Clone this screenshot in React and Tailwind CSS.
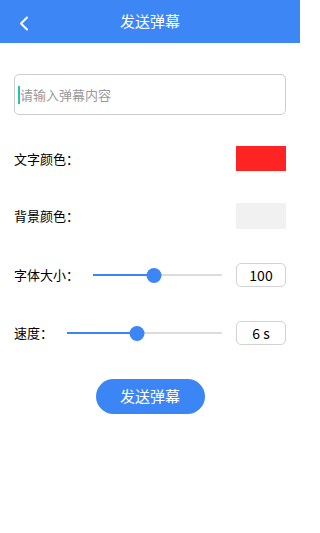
import React from "react";

const font = { fontFamily: '"Noto Sans CJK SC", "Liberation Sans", sans-serif' };

function Slider({ value }) {
  return (
    <div className="relative flex-1 h-[16px] flex items-center">
      <div className="h-[2px] w-full bg-[#dcdcdc]" />
      <div className="absolute left-0 h-[2px] bg-[#3c85f5]" style={{ width: `${value}%` }} />
      <div
        className="absolute w-[15px] h-[15px] rounded-full bg-[#3c85f5] -translate-x-1/2"
        style={{ left: `${value}%` }}
      />
    </div>
  );
}

function ValueBox({ children }) {
  return (
    <div className="w-[50px] h-[24px] rounded-[5px] border-[1.5px] border-[#d2d2d2] flex items-center justify-center text-[14px] text-black">
      {children}
    </div>
  );
}

export default function App() {
  return (
    <div className="w-[300px] h-[533px] bg-white" style={font}>
      <div className="relative h-[43px] bg-[#3c86f6] flex items-center justify-center">
        <svg className="absolute left-[18px] top-[16px]" width="12" height="15" viewBox="0 0 12 15">
          <path d="M9 1.5 L3 7.5 L9 13.5" fill="none" stroke="white" strokeWidth="2" strokeLinecap="round" strokeLinejoin="round" />
        </svg>
        <span className="text-white text-[15px]">发送弹幕</span>
      </div>

      <div className="px-[14px]">
        <div className="mt-[31px] h-[41px] rounded-[5px] border-[1.5px] border-[#cdcdcd] flex items-center pl-[3px]">
          <span className="w-[2px] h-[18px] bg-[#22c3b0]" />
          <span className="text-[13px] text-[#9a9a9a]">请输入弹幕内容</span>
        </div>

        <div className="mt-[31px] flex items-center justify-between">
          <span className="text-[13px] text-black">文字颜色：</span>
          <div className="w-[50px] h-[25px] bg-[#ff2424]" />
        </div>

        <div className="mt-[32px] flex items-center justify-between">
          <span className="text-[13px] text-black">背景颜色：</span>
          <div className="w-[50px] h-[26px] bg-[#f1f1f1]" />
        </div>

        <div className="mt-[34px] flex items-center">
          <span className="text-[13px] text-black w-[79px]">字体大小：</span>
          <Slider value={47.5} />
          <div className="ml-[14px]">
            <ValueBox>100</ValueBox>
          </div>
        </div>

        <div className="mt-[34px] flex items-center">
          <span className="text-[13px] text-black w-[53px]">速度：</span>
          <Slider value={45} />
          <div className="ml-[14px]">
            <ValueBox>6 s</ValueBox>
          </div>
        </div>

        <div className="mt-[34px] flex justify-center">
          <button className="w-[109px] h-[35px] rounded-full bg-[#3c85f5] text-white text-[15px]">发送弹幕</button>
        </div>
      </div>
    </div>
  );
}
